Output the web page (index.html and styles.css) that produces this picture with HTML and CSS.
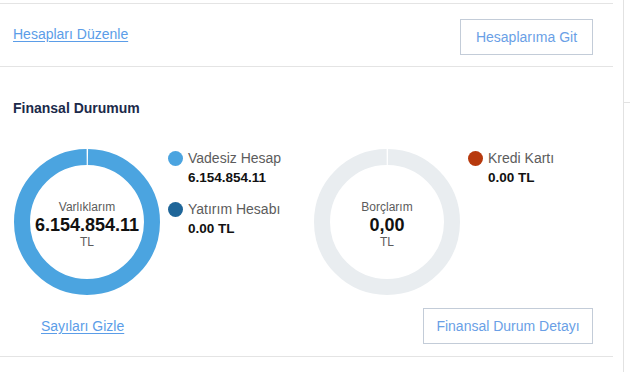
FILE: index.html
```html
<!DOCTYPE html>
<html lang="tr">
<head>
<meta charset="UTF-8" />
<meta name="viewport" content="width=device-width, initial-scale=1" />
<title>Finansal Durumum</title>
<link rel="stylesheet" href="styles.css">
</head>
<body>
<div class="page">
  <div class="content">
    <div class="accounts-bar">
      <a href="#" class="text-link edit-link">Hesapları Düzenle</a>
      <a href="#" class="outline-btn accounts-btn">Hesaplarıma Git</a>
    </div>

    <section class="finance">
      <h2 class="finance-title">Finansal Durumum</h2>

      <div class="charts">
        <div class="chart-group">
          <div class="donut">
            <svg width="146" height="146" viewBox="0 0 146 146" aria-hidden="true">
              <circle cx="73" cy="73" r="65" fill="none" stroke="#4ba4e0" stroke-width="16"
                      stroke-dasharray="406.4 2" stroke-dashoffset="-1" transform="rotate(-90 73 73)" />
            </svg>
            <div class="donut-label">
              <span class="donut-caption">Varlıklarım</span>
              <span class="donut-value">6.154.854.11</span>
              <span class="donut-unit">TL</span>
            </div>
          </div>
          <ul class="legend">
            <li class="legend-item">
              <div class="legend-name"><span class="dot dot-current"></span>Vadesiz Hesap</div>
              <div class="legend-value">6.154.854.11</div>
            </li>
            <li class="legend-item">
              <div class="legend-name"><span class="dot dot-invest"></span>Yatırım Hesabı</div>
              <div class="legend-value">0.00 TL</div>
            </li>
          </ul>
        </div>

        <div class="chart-group">
          <div class="donut">
            <svg width="146" height="146" viewBox="0 0 146 146" aria-hidden="true">
              <circle cx="73" cy="73" r="65" fill="none" stroke="#e9edf0" stroke-width="16"
                      stroke-dasharray="406.4 2" stroke-dashoffset="-1" transform="rotate(-90 73 73)" />
            </svg>
            <div class="donut-label">
              <span class="donut-caption">Borçlarım</span>
              <span class="donut-value">0,00</span>
              <span class="donut-unit">TL</span>
            </div>
          </div>
          <ul class="legend">
            <li class="legend-item">
              <div class="legend-name"><span class="dot dot-card"></span>Kredi Kartı</div>
              <div class="legend-value">0.00 TL</div>
            </li>
          </ul>
        </div>
      </div>

      <div class="finance-actions">
        <a href="#" class="text-link hide-link">Sayıları Gizle</a>
        <a href="#" class="outline-btn detail-btn">Finansal Durum Detayı</a>
      </div>
    </section>
  </div>

  <aside class="side">
    <div class="side-top"></div>
  </aside>
</div>
</body>
</html>
```

FILE: styles.css
```css
html, body {
  margin: 0;
  padding: 0;
  background: #fff;
  font-family: "Liberation Sans", Arial, sans-serif;
  color: #111;
}
.page {
  display: flex;
  align-items: flex-start;
  width: 630px;
}
.content {
  width: 613px;
  padding-top: 3px;
}
.side {
  margin-left: 10px;
  flex: 1;
  height: 372px;
  border-left: 1px solid #e2e2e2;
}
.side-top {
  height: 102px;
  border-bottom: 1px solid #e2e2e2;
}

.text-link {
  display: block;
  font-size: 14px;
  line-height: 16px;
  color: #5b9de8;
  text-decoration: underline;
  text-underline-offset: 2px;
}
.outline-btn {
  display: block;
  box-sizing: border-box;
  height: 36px;
  border: 1px solid #c3ccd8;
  font-size: 14px;
  line-height: 34px;
  text-align: center;
  color: #6a9fe6;
  text-decoration: none;
}

.accounts-bar {
  box-sizing: border-box;
  height: 64px;
  border-top: 1px solid #e4e4e4;
  border-bottom: 1px solid #e4e4e4;
  display: flex;
  justify-content: space-between;
  align-items: flex-start;
  padding: 15px 20px 0 13px;
}
.edit-link {
  margin-top: 7px;
}
.accounts-btn {
  width: 133px;
}

.finance {
  padding-top: 33px;
  border-bottom: 1px solid #e4e4e4;
}
.finance-title {
  margin: 0 0 0 13px;
  font-size: 14px;
  line-height: 16px;
  font-weight: 700;
  color: #1b2a4a;
}
.charts {
  display: grid;
  grid-template-columns: 300px 300px;
  padding-left: 14px;
  margin-top: 33px;
}
.chart-group {
  display: flex;
  gap: 8px;
}
.donut {
  position: relative;
  width: 146px;
  height: 146px;
}
.donut svg {
  display: block;
}
.donut-label {
  position: absolute;
  inset: 0;
  display: flex;
  flex-direction: column;
  align-items: center;
  justify-content: center;
  padding-top: 4px;
}
.donut-caption {
  font-size: 12px;
  line-height: 16px;
  color: #5c5c5c;
}
.donut-value {
  font-size: 18px;
  line-height: 20px;
  font-weight: 700;
  color: #111;
}
.donut-unit {
  font-size: 12px;
  line-height: 14px;
  color: #5c5c5c;
}

.legend {
  list-style: none;
  margin: 0;
  padding: 0;
}
.legend-item {
  margin-bottom: 14px;
}
.legend-name {
  display: flex;
  align-items: center;
  gap: 5px;
  height: 18px;
  font-size: 14px;
  line-height: 18px;
  color: #5c5c5c;
}
.dot {
  width: 15px;
  height: 15px;
  border-radius: 50%;
  flex: none;
}
.dot-current { background: #4ba4e0; }
.dot-invest { background: #1f6699; }
.dot-card { background: #b7390d; }
.legend-value {
  margin: 3px 0 0 20px;
  font-size: 13.5px;
  line-height: 16px;
  font-weight: 700;
  color: #111;
}

.finance-actions {
  display: flex;
  justify-content: space-between;
  align-items: flex-start;
  margin-top: 13px;
  padding: 0 20px 12px 41px;
}
.hide-link {
  margin-top: 10px;
}
.detail-btn {
  width: 170px;
}
```
